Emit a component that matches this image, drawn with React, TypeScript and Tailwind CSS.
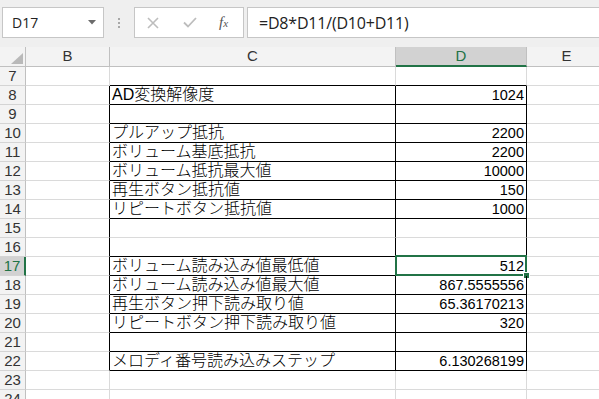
import React from 'react';

type Row = { n: number; label?: string; value?: string };

const rows: Row[] = [
  { n: 7 },
  { n: 8, label: 'AD変換解像度', value: '1024' },
  { n: 9 },
  { n: 10, label: 'プルアップ抵抗', value: '2200' },
  { n: 11, label: 'ボリューム基底抵抗', value: '2200' },
  { n: 12, label: 'ボリューム抵抗最大値', value: '10000' },
  { n: 13, label: '再生ボタン抵抗値', value: '150' },
  { n: 14, label: 'リピートボタン抵抗値', value: '1000' },
  { n: 15 },
  { n: 16 },
  { n: 17, label: 'ボリューム読み込み値最低値', value: '512' },
  { n: 18, label: 'ボリューム読み込み値最大値', value: '867.5555556' },
  { n: 19, label: '再生ボタン押下読み取り値', value: '65.36170213' },
  { n: 20, label: 'リピートボタン押下読み取り値', value: '320' },
  { n: 21 },
  { n: 22, label: 'メロディ番号読み込みステップ', value: '6.130268199' },
  { n: 23 },
  { n: 24 },
];

const SELECTED = 17;

// rows whose bottom edge (in C and D) is a black border
const blackBottom = (n: number) => n >= 7 && n <= 22 && n !== 15;
const inTable = (n: number) => n >= 8 && n <= 22;

const Toolbar = () => (
  <div className="h-[47px] bg-[#efefef] flex items-start pt-[7px]">
    <div className="ml-[2px] w-[102px] h-[31px] border border-[#c6c6c6] bg-white flex items-center justify-between pl-[9px] pr-[7px]">
      <span className="text-[14px] text-[#222] font-['Open_Sans',sans-serif]">D17</span>
      <svg width="8" height="5" viewBox="0 0 8 5">
        <path d="M0 0 L8 0 L4 4.5 Z" fill="#6b6b6b" />
      </svg>
    </div>
    <div className="w-[30px] h-[31px] flex flex-col items-center justify-center gap-[2px]">
      <span className="w-[2px] h-[2px] bg-[#a8a8a8]" />
      <span className="w-[2px] h-[2px] bg-[#a8a8a8]" />
      <span className="w-[2px] h-[2px] bg-[#a8a8a8]" />
    </div>
    <div className="w-[110px] h-[31px] border border-[#c6c6c6] bg-white flex items-center">
      <svg width="12" height="12" viewBox="0 0 12 12" className="ml-[12px]">
        <path d="M1 1 L11 11 M11 1 L1 11" stroke="#bdbdbd" strokeWidth="1.6" />
      </svg>
      <svg width="14" height="11" viewBox="0 0 14 11" className="ml-[24px]">
        <path d="M1 5.5 L5 9.5 L13 1" stroke="#bdbdbd" strokeWidth="1.8" fill="none" />
      </svg>
      <span className="ml-[22px] text-[15px] italic text-[#555] font-['Liberation_Serif',serif] leading-none">
        f<span className="text-[11px]">x</span>
      </span>
    </div>
    <div className="ml-[3px] flex-1 h-[31px] border border-r-0 border-[#c6c6c6] bg-white flex items-center pl-[11px]">
      <span className="text-[16px] text-[#222] font-['Open_Sans',sans-serif] tracking-[-0.2px]">=D8*D11/(D10+D11)</span>
    </div>
  </div>
);

const HeaderRow = () => (
  <div className="flex h-[20px] bg-[#f3f3f3] text-[15px] text-[#333]">
    <div className="w-[26px] h-full border-r border-b border-[#c0c0c0] relative shrink-0">
      <svg width="12" height="11" viewBox="0 0 12 11" className="absolute right-[2px] bottom-[2px]">
        <path d="M12 0 L12 11 L0 11 Z" fill="#b9b9b9" />
      </svg>
    </div>
    <div className="w-[84px] h-full border-r border-b border-[#c0c0c0] flex items-center justify-center shrink-0">B</div>
    <div className="w-[286px] h-full border-r border-b border-[#c0c0c0] flex items-center justify-center shrink-0">C</div>
    <div className="w-[131px] h-full border-r border-[#c0c0c0] border-b-2 border-b-[#217346] bg-[#d2d2d2] text-[#217346] flex items-center justify-center shrink-0">D</div>
    <div className="w-[80px] h-full border-r border-b border-[#c0c0c0] flex items-center justify-center shrink-0">E</div>
  </div>
);

const SheetRow = ({ row }: { row: Row }) => {
  const sel = row.n === SELECTED;
  const t = inTable(row.n);
  const bb = blackBottom(row.n);
  return (
    <div className="flex h-[19px]">
      <div
        className={
          sel
            ? 'w-[26px] h-full shrink-0 bg-[#d2d2d2] border-b border-b-[#d4d4d4] border-r-2 border-r-[#217346] text-[#217346] text-[15px] flex items-center justify-center'
            : 'w-[26px] h-full shrink-0 bg-[#f3f3f3] border-b border-b-[#d4d4d4] border-r border-r-[#c0c0c0] text-[#333] text-[15px] flex items-center justify-center'
        }
      >
        {row.n}
      </div>
      <div
        className={
          t
            ? 'w-[84px] h-full shrink-0 border-b border-b-[#dadada] border-r border-r-black'
            : 'w-[84px] h-full shrink-0 border-b border-b-[#dadada] border-r border-r-[#dadada]'
        }
      />
      <div
        className={
          (t ? 'border-r-black ' : 'border-r-[#dadada] ') +
          (bb ? 'border-b-black ' : 'border-b-[#dadada] ') +
          'w-[286px] h-full shrink-0 border-r border-b flex items-center pl-[2px] overflow-hidden'
        }
      >
        {row.label && (
          <span className="text-[16px] leading-[18px] font-light text-black font-['Liberation_Sans','Noto_Sans_CJK_JP',sans-serif] whitespace-nowrap">
            {row.label}
          </span>
        )}
      </div>
      <div
        className={
          (t ? 'border-r-black ' : 'border-r-[#dadada] ') +
          (bb ? 'border-b-black ' : 'border-b-[#dadada] ') +
          'w-[131px] h-full shrink-0 border-r border-b flex items-center justify-end pr-[2px] relative'
        }
      >
        {row.value && <span className="text-[14.5px] leading-[18px] text-black">{row.value}</span>}
        {sel && (
          <>
            <div className="absolute -top-[2px] -left-[1px] -right-[1px] -bottom-[1px] border-2 border-[#217346]" />
            <div className="absolute -right-[4px] -bottom-[4px] w-[7px] h-[7px] bg-[#217346] border border-white" />
          </>
        )}
      </div>
      <div className="w-[80px] h-full shrink-0 border-b border-b-[#dadada] border-r border-r-[#dadada]" />
    </div>
  );
};

export default function App() {
  return (
    <div className="w-[599px] h-[399px] overflow-hidden bg-white font-['Liberation_Sans',sans-serif]">
      <Toolbar />
      <HeaderRow />
      {rows.map((r) => (
        <SheetRow key={r.n} row={r} />
      ))}
    </div>
  );
}
